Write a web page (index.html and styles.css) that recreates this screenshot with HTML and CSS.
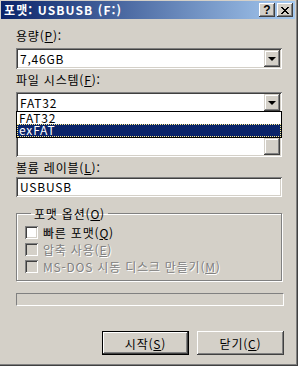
FILE: index.html
```html
<!DOCTYPE html>
<html lang="ko">
<head>
    <meta charset="UTF-8">
    <title>포맷: USBUSB (F:)</title>
    <link rel="stylesheet" href="styles.css">
</head>
<body>
    <div class="window">
        <div class="titlebar">
            <span class="title">포맷: USBUSB (F:)</span>
            <div class="tbtns">
                <span class="tbtn">?</span>
                <span class="tbtn">
                    <svg width="8" height="7" viewBox="0 0 8 7"><path d="M0 0h2v1h1v1h2v-1h1v-1h2v1h-1v1h-1v1h-1v1h1v1h1v1h1v1h-2v-1h-1v-1h-2v1h-1v1h-2v-1h1v-1h1v-1h1v-1h-1v-1h-1v-1h-1z" fill="#000"/></svg>
                </span>
            </div>
        </div>

        <div class="content">
            <div class="label">용량(<u>P</u>):</div>
            <div class="combo">
                <div class="combo-text">7,46GB</div>
                <div class="drop-btn"><i class="arrow"></i></div>
            </div>

            <div class="label">파일 시스템(<u>F</u>):</div>
            <div class="combo">
                <div class="combo-text">FAT32</div>
                <div class="drop-btn"><i class="arrow"></i></div>
            </div>

            <!-- allocation size row, covered by the open list -->
            <div class="label covered"></div>
            <div class="combo">
                <div class="combo-text"></div>
                <div class="drop-btn"></div>
            </div>

            <div class="label">볼륨 레이블(<u>L</u>):</div>
            <div class="edit">USBUSB</div>

            <fieldset class="group">
                <legend>포맷 옵션(<u>O</u>)</legend>
                <label class="check"><span class="box"></span><span>빠른 포맷(<u>Q</u>)</span></label>
                <label class="check disabled"><span class="box"></span><span>압축 사용(<u>E</u>)</span></label>
                <label class="check disabled"><span class="box"></span><span>MS-DOS 시동 디스크 만들기(<u>M</u>)</span></label>
            </fieldset>

            <div class="progress"></div>

            <div class="buttons">
                <button class="btn default">시작(<u>S</u>)</button>
                <button class="btn">닫기(<u>C</u>)</button>
            </div>

            <div class="droplist">
                <div class="item">FAT32</div>
                <div class="item selected">exFAT</div>
            </div>
        </div>
    </div>
</body>
</html>
```

FILE: styles.css
```css
* {
    margin: 0;
    padding: 0;
    box-sizing: border-box;
}

body {
    width: 298px;
    height: 366px;
    overflow: hidden;
    background: #d4d0c8;
    font-family: "Noto Sans CJK KR", sans-serif;
    font-size: 12px;
    letter-spacing: 0.8px;
    color: #000;
}

u {
    text-decoration: underline;
    text-underline-offset: 1px;
}

.window {
    width: 298px;
    height: 366px;
    padding: 1px;
    border-right: 1px solid #404040;
    border-bottom: 1px solid #404040;
    box-shadow: inset -1px -1px #808080;
}

.titlebar {
    height: 18px;
    display: flex;
    align-items: center;
    justify-content: space-between;
    padding: 0 2px 0 3px;
    margin-right: 1px;
    background: linear-gradient(to right, #0a246a, #a6caf0);
    color: #fff;
    font-weight: bold;
    font-size: 12px;
    letter-spacing: 1.1px;
    line-height: 18px;
}

.tbtns {
    display: flex;
    gap: 2px;
}

.tbtn {
    width: 16px;
    height: 14px;
    display: flex;
    align-items: center;
    justify-content: center;
    background: #d4d0c8;
    box-shadow: inset -1px -1px #404040, inset 1px 1px #fff, inset -2px -2px #808080;
    color: #000;
    font-family: "Liberation Sans", sans-serif;
    font-size: 12px;
    font-weight: bold;
    letter-spacing: 0;
    line-height: 14px;
}

.content {
    position: relative;
    width: 267px;
    margin-left: 15px;
    padding-top: 10px;
    display: flex;
    flex-direction: column;
}

.label {
    height: 13px;
    line-height: 13px;
    margin-bottom: 6px;
}

.combo {
    height: 21px;
    width: 266px;
    display: flex;
    align-items: center;
    justify-content: space-between;
    padding: 2px;
    margin-bottom: 4px;
    background: #fff;
    box-shadow: inset 1px 1px #808080, inset -1px -1px #fff, inset 2px 2px #404040, inset -2px -2px #d4d0c8;
}

.combo-text {
    padding-left: 2px;
    line-height: 15px;
}

.drop-btn {
    width: 16px;
    height: 17px;
    display: flex;
    align-items: center;
    justify-content: center;
    background: #d4d0c8;
    box-shadow: inset -1px -1px #404040, inset 1px 1px #d4d0c8, inset -2px -2px #808080, inset 2px 2px #fff;
}

.arrow {
    width: 0;
    height: 0;
    border-left: 4px solid transparent;
    border-right: 4px solid transparent;
    border-top: 4px solid #000;
    margin-top: 1px;
}

.edit {
    height: 20px;
    width: 266px;
    margin-top: -3px;
    padding: 2px 4px;
    line-height: 16px;
    background: #fff;
    box-shadow: inset 1px 1px #808080, inset -1px -1px #fff, inset 2px 2px #404040, inset -2px -2px #d4d0c8;
}

.group {
    width: 266px;
    height: 74px;
    margin-top: 10px;
    padding: 6px 0 0 8px;
    border: 1px solid #808080;
    box-shadow: 1px 1px #fff, inset 1px 1px #fff;
    display: flex;
    flex-direction: column;
    gap: 4px;
}

.group legend {
    margin-left: 6px;
    padding: 0 3px;
    line-height: 13px;
}

.check {
    display: flex;
    align-items: center;
    gap: 5px;
    height: 13px;
    line-height: 13px;
}

.box {
    width: 13px;
    height: 13px;
    background: #fff;
    box-shadow: inset 1px 1px #808080, inset -1px -1px #fff, inset 2px 2px #404040, inset -2px -2px #d4d0c8;
}

.check.disabled {
    color: #808080;
    text-shadow: 1px 1px #fff;
}

.check.disabled .box {
    background: #d4d0c8;
}

.progress {
    width: 268px;
    height: 13px;
    margin-top: 12px;
    border-top: 1px solid #808080;
    border-left: 1px solid #808080;
    border-bottom: 1px solid #fff;
    border-right: 1px solid #fff;
}

.buttons {
    display: flex;
    justify-content: flex-end;
    gap: 8px;
    margin-top: 25px;
    width: 268px;
}

.btn {
    width: 87px;
    height: 24px;
    font-family: inherit;
    font-size: 12px;
    letter-spacing: 0.8px;
    background: #d4d0c8;
    border: none;
    box-shadow: inset -1px -1px #404040, inset 1px 1px #fff, inset -2px -2px #808080;
}

.btn.default {
    border: 1px solid #000;
}

.droplist {
    position: absolute;
    left: 0;
    top: 92px;
    width: 266px;
    height: 27px;
    background: #fff;
    border: 1px solid #000;
}

.droplist .item {
    height: 12px;
    line-height: 12px;
    padding-left: 2px;
}

.droplist .item.selected {
    height: 13px;
    background: #0a246a;
    color: #fff;
    outline: 1px dotted #ffee88;
    outline-offset: -1px;
}
```
